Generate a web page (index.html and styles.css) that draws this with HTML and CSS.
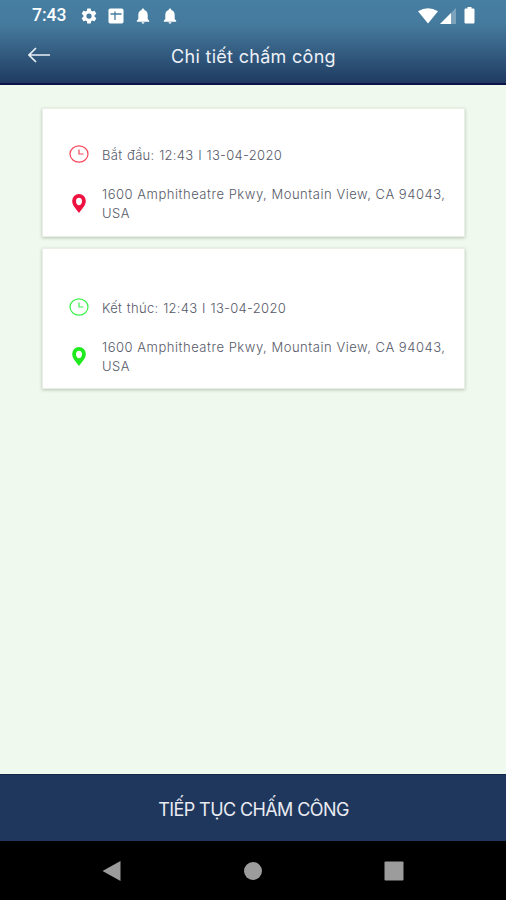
FILE: index.html
```html
<!DOCTYPE html>
<html lang="vi">
<head>
<meta charset="utf-8">
<title>Chi tiết chấm công</title>
<link rel="stylesheet" href="styles.css">
</head>
<body>
<div class="screen">
  <header class="top">
    <div class="status">
      <span class="clock">7:43</span>
      <svg class="s-icon gear" viewBox="0 0 24 24"><path fill-rule="evenodd" d="M19.4 13c.1-.7.1-1.300 0-2l2.100-1.600c.2-.2.2-.4.1-.6l-2-3.500c-.1-.2-.4-.3-.6-.2l-2.500 1c-.5-.4-1.100-.7-1.700-1l-.4-2.600c0-.3-.2-.5-.4-.5h-4c-.2 0-.4.2-.4.5L9.200 5.100c-.6.3-1.200.6-1.700 1l-2.500-1c-.2-.1-.5 0-.6.2l-2 3.500c-.1.200-.1.400.1.600L4.600 11c-.1.700-.1 1.300 0 2l-2.100 1.600c-.2.200-.2.400-.1.600l2 3.500c.1.200.4.300.6.200l2.500-1c.5.400 1.100.7 1.700 1l.4 2.600c0 .3.2.5.4.5h4c.2 0 .4-.2.4-.5l.4-2.600c.6-.3 1.200-.6 1.700-1l2.500 1c.2.1.5 0 .6-.2l2-3.500c.1-.2.1-.4-.1-.6zM12 15.500a3.500 3.500 0 1 1 0-7 3.500 3.500 0 0 1 0 7z"/></svg>
      <svg class="s-icon grid" viewBox="0 0 16 16"><rect x=".5" y=".5" width="15" height="15" rx="1.800"/><path class="grid-line" d="M2.500 6h11M7 3.500v8.500"/></svg>
      <svg class="s-icon bell" viewBox="0 0 14 16"><path d="M7 .5c-.8 0-1.300.6-1.300 1.400C3.400 2.500 2.300 4.500 2.300 7v4L.8 12.800v.9h12.400v-.9L11.700 11V7c0-2.500-1.100-4.500-3.400-5.100C8.300 1.100 7.800.5 7 .5zM5.500 14.300h3c0 .8-.7 1.400-1.500 1.400s-1.500-.6-1.500-1.400z"/></svg>
      <svg class="s-icon bell" viewBox="0 0 14 16"><path d="M7 .5c-.8 0-1.300.6-1.300 1.400C3.400 2.500 2.300 4.500 2.300 7v4L.8 12.800v.9h12.400v-.9L11.700 11V7c0-2.500-1.100-4.500-3.400-5.100C8.300 1.100 7.800.5 7 .5zM5.500 14.300h3c0 .8-.7 1.400-1.500 1.400s-1.500-.6-1.500-1.400z"/></svg>
      <svg class="s-icon wifi" viewBox="0 0 20 16"><path d="M0 3.200Q10-2.800 20 3.200L10 15.500z"/></svg>
      <svg class="s-icon signal" viewBox="0 0 16 16"><path class="dim" d="M16 0v16H0z"/><path d="M11 5v11H0z"/></svg>
      <svg class="s-icon battery" viewBox="0 0 11 17"><path d="M3.500 0h4v1.600h1.700c.8 0 1.300.5 1.300 1.300v12.300c0 .8-.5 1.300-1.300 1.300H1.800c-.8 0-1.300-.5-1.300-1.300V2.900c0-.8.5-1.300 1.300-1.300h1.700z"/></svg>
    </div>
    <div class="bar">
      <svg class="back" viewBox="0 0 22 16"><path d="M8 1L1 8l7 7M1 8h21"/></svg>
      <h1 class="title">Chi tiết chấm công</h1>
    </div>
  </header>
  <main class="content">
    <section class="card start">
      <div class="row">
        <svg class="time-icon" viewBox="0 0 20 18"><ellipse cx="10" cy="9" rx="9" ry="8.100"/><path d="M10 4.500V9h4.500"/></svg>
        <p class="text time">Bắt đầu: 12:43 I 13-04-2020</p>
      </div>
      <div class="row place">
        <svg class="pin" viewBox="0 0 14 19"><path fill-rule="evenodd" d="M7 0a6.800 6.800 0 0 0-6.800 6.900C.2 11.300 4 14.800 7 19c3-4.200 6.800-7.700 6.800-12.100A6.800 6.800 0 0 0 7 0zm0 3.800c2 0 3 1.500 3 3.400S8.800 11.200 7 11.200 4 9.100 4 7.200s1-3.400 3-3.400z"/></svg>
        <p class="text address">1600 Amphitheatre Pkwy, Mountain View, CA 94043,<br>USA</p>
      </div>
    </section>
    <section class="card end">
      <div class="row">
        <svg class="time-icon" viewBox="0 0 20 18"><ellipse cx="10" cy="9" rx="9" ry="8.100"/><path d="M10 4.500V9h4.500"/></svg>
        <p class="text time">Kết thúc: 12:43 I 13-04-2020</p>
      </div>
      <div class="row place">
        <svg class="pin" viewBox="0 0 14 19"><path fill-rule="evenodd" d="M7 0a6.800 6.800 0 0 0-6.800 6.900C.2 11.300 4 14.800 7 19c3-4.200 6.800-7.700 6.800-12.100A6.800 6.800 0 0 0 7 0zm0 3.800c2 0 3 1.500 3 3.400S8.800 11.200 7 11.200 4 9.100 4 7.200s1-3.400 3-3.400z"/></svg>
        <p class="text address">1600 Amphitheatre Pkwy, Mountain View, CA 94043,<br>USA</p>
      </div>
    </section>
  </main>
  <button class="action">TIẾP TỤC CHẤM CÔNG</button>
  <nav class="nav">
    <svg class="nav-icon" viewBox="0 0 20 22"><path d="M18.500 1v20L.5 11z"/></svg>
    <svg class="nav-icon" viewBox="0 0 20 22"><circle cx="10" cy="11" r="9"/></svg>
    <svg class="nav-icon" viewBox="0 0 20 22"><rect x=".5" y="1.500" width="19" height="19" rx="1"/></svg>
  </nav>
</div>
</body>
</html>
```
FILE: styles.css
```css
* { box-sizing: border-box; }
body { margin: 0; font-family: Inter, "Liberation Sans", sans-serif; }
h1, p { margin: 0; }
svg { display: block; flex: none; }

.screen { width: 506px; height: 900px; display: flex; flex-direction: column; background: #eff9ed; }

.top { height: 85px; flex: none; background: linear-gradient(#467fa3 0, #457a9d 25px, #203b61 83px); border-bottom: 2px solid #10134a; }
.status { height: 31px; padding: 0 31px 0 32px; display: flex; align-items: center; }
.clock { width: 48px; font: 500 17.5px/31px Roboto, sans-serif; color: #fff; }
.s-icon { fill: #fff; }
.gear { width: 18px; height: 18px; margin-right: 10px; }
.grid { width: 16px; height: 16px; margin-right: 12px; }
.grid-line { fill: none; stroke: #467c9f; stroke-width: 1.3; }
.bell { width: 14px; height: 16px; margin-right: 13px; }
.wifi { width: 20px; height: 16px; margin-left: auto; }
.signal { width: 16px; height: 16px; margin: 0 8px 0 2px; }
.dim { opacity: .3; }
.battery { width: 11px; height: 17px; }

.bar { height: 52px; display: grid; grid-template-columns: 50px 1fr 50px; align-items: center; }
.back { width: 22px; height: 16px; margin: -5px 0 0 28px; fill: none; stroke: #e8f0f6; stroke-width: 1.7; }
.title { text-align: center; font-size: 18px; font-weight: 400; line-height: 24px; letter-spacing: .3px; color: #edf1f7; padding-left: 1px; }

.content { flex: 1; padding: 23px 41px 0 42px; }
.card { background: #fff; border: 1px solid #e9eee6; box-shadow: 0 1px 3px rgba(60, 70, 55, .3); padding-left: 26px; }
.start { height: 129px; padding-top: 36px; color: #f5485a; }
.end { height: 141px; margin-top: 11px; padding-top: 49px; color: #3cf04c; }
.row { display: flex; align-items: center; height: 21px; }
.time-icon { width: 20px; height: 18px; margin: -3px 13px 0 0; fill: none; stroke: currentColor; stroke-width: 1.2; }
.pin { width: 14px; height: 19px; margin: -2px 16px 0 3px; fill: currentColor; }
.place { height: 40px; margin-top: 18px; }
.text { font-size: 13px; font-weight: 300; line-height: 19px; color: #565968; white-space: nowrap; }
.time { letter-spacing: .3px; word-spacing: .7px; }
.address { letter-spacing: .53px; }
.start .pin { color: #ee1240; }
.end .pin { color: #1eea1e; }

.action { height: 67px; flex: none; border: 0; border-top: 1px solid #13284b; padding: 4px 0 0 1px; background: #1f375d; color: #e9ebf1; font: 400 18px/24px Inter, "Liberation Sans", sans-serif; letter-spacing: -.6px; }
.nav { height: 59px; flex: none; background: #000; padding: 0 102px; display: flex; align-items: center; justify-content: space-between; }
.nav-icon { width: 20px; height: 22px; fill: #9c9c9c; }
```
